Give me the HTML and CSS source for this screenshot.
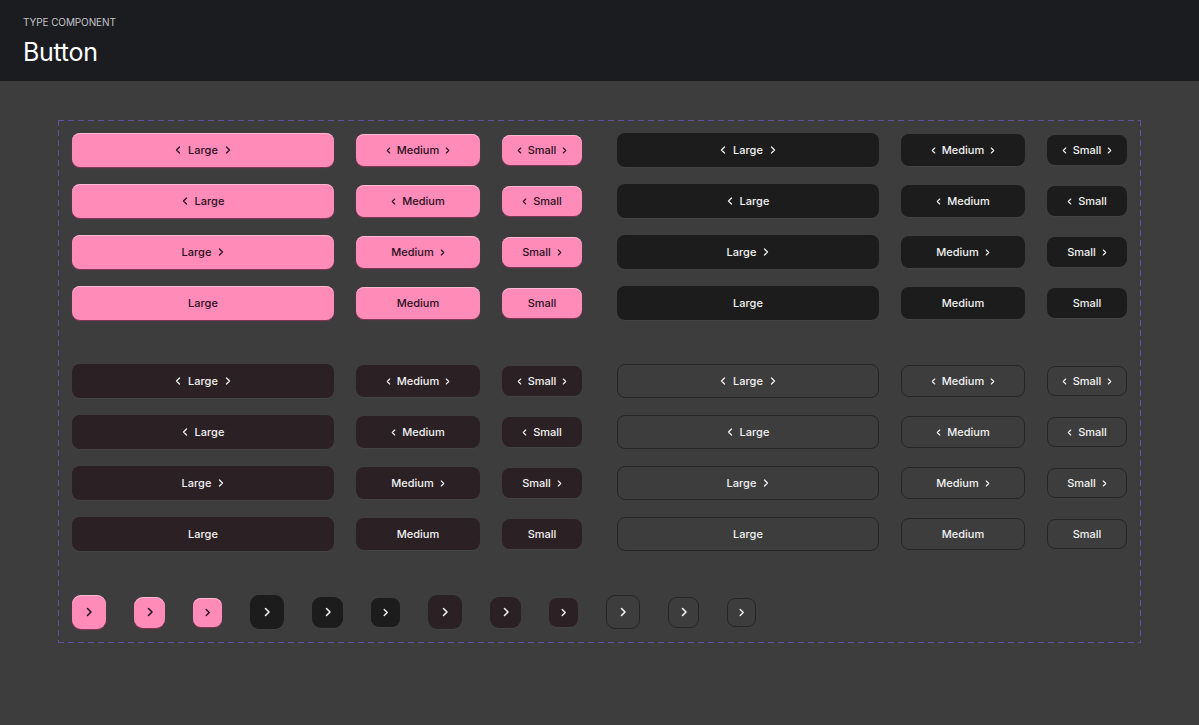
FILE: index.html
```html
<!DOCTYPE html>
<html>
<head>
<meta charset="utf-8">
<link rel="stylesheet" href="styles.css">
</head>
<body>
<header class="top">
  <div class="eyebrow">TYPE COMPONENT</div>
  <h1 class="title">Button</h1>
</header>
<main class="canvas">
  <div class="frame">
    <div class="section">
      <div class="group pink">
        <div class="btn lg"><svg class="ch" viewBox="0 0 6 8"><path d="M4.5 1 L1.5 4 L4.5 7"/></svg><span>Large</span><svg class="ch" viewBox="0 0 6 8"><path d="M1.5 1 L4.5 4 L1.5 7"/></svg></div>
        <div class="btn md"><svg class="ch" viewBox="0 0 6 8"><path d="M4.5 1 L1.5 4 L4.5 7"/></svg><span>Medium</span><svg class="ch" viewBox="0 0 6 8"><path d="M1.5 1 L4.5 4 L1.5 7"/></svg></div>
        <div class="btn sm"><svg class="ch" viewBox="0 0 6 8"><path d="M4.5 1 L1.5 4 L4.5 7"/></svg><span>Small</span><svg class="ch" viewBox="0 0 6 8"><path d="M1.5 1 L4.5 4 L1.5 7"/></svg></div>
        <div class="btn lg"><svg class="ch" viewBox="0 0 6 8"><path d="M4.5 1 L1.5 4 L4.5 7"/></svg><span>Large</span></div>
        <div class="btn md"><svg class="ch" viewBox="0 0 6 8"><path d="M4.5 1 L1.5 4 L4.5 7"/></svg><span>Medium</span></div>
        <div class="btn sm"><svg class="ch" viewBox="0 0 6 8"><path d="M4.5 1 L1.5 4 L4.5 7"/></svg><span>Small</span></div>
        <div class="btn lg"><span>Large</span><svg class="ch" viewBox="0 0 6 8"><path d="M1.5 1 L4.5 4 L1.5 7"/></svg></div>
        <div class="btn md"><span>Medium</span><svg class="ch" viewBox="0 0 6 8"><path d="M1.5 1 L4.5 4 L1.5 7"/></svg></div>
        <div class="btn sm"><span>Small</span><svg class="ch" viewBox="0 0 6 8"><path d="M1.5 1 L4.5 4 L1.5 7"/></svg></div>
        <div class="btn lg"><span>Large</span></div>
        <div class="btn md"><span>Medium</span></div>
        <div class="btn sm"><span>Small</span></div>
      </div>
      <div class="group black">
        <div class="btn lg"><svg class="ch" viewBox="0 0 6 8"><path d="M4.5 1 L1.5 4 L4.5 7"/></svg><span>Large</span><svg class="ch" viewBox="0 0 6 8"><path d="M1.5 1 L4.5 4 L1.5 7"/></svg></div>
        <div class="btn md"><svg class="ch" viewBox="0 0 6 8"><path d="M4.5 1 L1.5 4 L4.5 7"/></svg><span>Medium</span><svg class="ch" viewBox="0 0 6 8"><path d="M1.5 1 L4.5 4 L1.5 7"/></svg></div>
        <div class="btn sm"><svg class="ch" viewBox="0 0 6 8"><path d="M4.5 1 L1.5 4 L4.5 7"/></svg><span>Small</span><svg class="ch" viewBox="0 0 6 8"><path d="M1.5 1 L4.5 4 L1.5 7"/></svg></div>
        <div class="btn lg"><svg class="ch" viewBox="0 0 6 8"><path d="M4.5 1 L1.5 4 L4.5 7"/></svg><span>Large</span></div>
        <div class="btn md"><svg class="ch" viewBox="0 0 6 8"><path d="M4.5 1 L1.5 4 L4.5 7"/></svg><span>Medium</span></div>
        <div class="btn sm"><svg class="ch" viewBox="0 0 6 8"><path d="M4.5 1 L1.5 4 L4.5 7"/></svg><span>Small</span></div>
        <div class="btn lg"><span>Large</span><svg class="ch" viewBox="0 0 6 8"><path d="M1.5 1 L4.5 4 L1.5 7"/></svg></div>
        <div class="btn md"><span>Medium</span><svg class="ch" viewBox="0 0 6 8"><path d="M1.5 1 L4.5 4 L1.5 7"/></svg></div>
        <div class="btn sm"><span>Small</span><svg class="ch" viewBox="0 0 6 8"><path d="M1.5 1 L4.5 4 L1.5 7"/></svg></div>
        <div class="btn lg"><span>Large</span></div>
        <div class="btn md"><span>Medium</span></div>
        <div class="btn sm"><span>Small</span></div>
      </div>
    </div>
    <div class="section">
      <div class="group plum">
        <div class="btn lg"><svg class="ch" viewBox="0 0 6 8"><path d="M4.5 1 L1.5 4 L4.5 7"/></svg><span>Large</span><svg class="ch" viewBox="0 0 6 8"><path d="M1.5 1 L4.5 4 L1.5 7"/></svg></div>
        <div class="btn md"><svg class="ch" viewBox="0 0 6 8"><path d="M4.5 1 L1.5 4 L4.5 7"/></svg><span>Medium</span><svg class="ch" viewBox="0 0 6 8"><path d="M1.5 1 L4.5 4 L1.5 7"/></svg></div>
        <div class="btn sm"><svg class="ch" viewBox="0 0 6 8"><path d="M4.5 1 L1.5 4 L4.5 7"/></svg><span>Small</span><svg class="ch" viewBox="0 0 6 8"><path d="M1.5 1 L4.5 4 L1.5 7"/></svg></div>
        <div class="btn lg"><svg class="ch" viewBox="0 0 6 8"><path d="M4.5 1 L1.5 4 L4.5 7"/></svg><span>Large</span></div>
        <div class="btn md"><svg class="ch" viewBox="0 0 6 8"><path d="M4.5 1 L1.5 4 L4.5 7"/></svg><span>Medium</span></div>
        <div class="btn sm"><svg class="ch" viewBox="0 0 6 8"><path d="M4.5 1 L1.5 4 L4.5 7"/></svg><span>Small</span></div>
        <div class="btn lg"><span>Large</span><svg class="ch" viewBox="0 0 6 8"><path d="M1.5 1 L4.5 4 L1.5 7"/></svg></div>
        <div class="btn md"><span>Medium</span><svg class="ch" viewBox="0 0 6 8"><path d="M1.5 1 L4.5 4 L1.5 7"/></svg></div>
        <div class="btn sm"><span>Small</span><svg class="ch" viewBox="0 0 6 8"><path d="M1.5 1 L4.5 4 L1.5 7"/></svg></div>
        <div class="btn lg"><span>Large</span></div>
        <div class="btn md"><span>Medium</span></div>
        <div class="btn sm"><span>Small</span></div>
      </div>
      <div class="group outline">
        <div class="btn lg"><svg class="ch" viewBox="0 0 6 8"><path d="M4.5 1 L1.5 4 L4.5 7"/></svg><span>Large</span><svg class="ch" viewBox="0 0 6 8"><path d="M1.5 1 L4.5 4 L1.5 7"/></svg></div>
        <div class="btn md"><svg class="ch" viewBox="0 0 6 8"><path d="M4.5 1 L1.5 4 L4.5 7"/></svg><span>Medium</span><svg class="ch" viewBox="0 0 6 8"><path d="M1.5 1 L4.5 4 L1.5 7"/></svg></div>
        <div class="btn sm"><svg class="ch" viewBox="0 0 6 8"><path d="M4.5 1 L1.5 4 L4.5 7"/></svg><span>Small</span><svg class="ch" viewBox="0 0 6 8"><path d="M1.5 1 L4.5 4 L1.5 7"/></svg></div>
        <div class="btn lg"><svg class="ch" viewBox="0 0 6 8"><path d="M4.5 1 L1.5 4 L4.5 7"/></svg><span>Large</span></div>
        <div class="btn md"><svg class="ch" viewBox="0 0 6 8"><path d="M4.5 1 L1.5 4 L4.5 7"/></svg><span>Medium</span></div>
        <div class="btn sm"><svg class="ch" viewBox="0 0 6 8"><path d="M4.5 1 L1.5 4 L4.5 7"/></svg><span>Small</span></div>
        <div class="btn lg"><span>Large</span><svg class="ch" viewBox="0 0 6 8"><path d="M1.5 1 L4.5 4 L1.5 7"/></svg></div>
        <div class="btn md"><span>Medium</span><svg class="ch" viewBox="0 0 6 8"><path d="M1.5 1 L4.5 4 L1.5 7"/></svg></div>
        <div class="btn sm"><span>Small</span><svg class="ch" viewBox="0 0 6 8"><path d="M1.5 1 L4.5 4 L1.5 7"/></svg></div>
        <div class="btn lg"><span>Large</span></div>
        <div class="btn md"><span>Medium</span></div>
        <div class="btn sm"><span>Small</span></div>
      </div>
    </div>
    <div class="icons">
      <div class="ibtn pink ilg"><svg class="ich" viewBox="0 0 8 10"><path d="M2.5 1.5 L6 5 L2.5 8.5"/></svg></div>
      <div class="ibtn pink imd"><svg class="ich" viewBox="0 0 8 10"><path d="M2.5 1.5 L6 5 L2.5 8.5"/></svg></div>
      <div class="ibtn pink ism"><svg class="ich" viewBox="0 0 8 10"><path d="M2.5 1.5 L6 5 L2.5 8.5"/></svg></div>
      <div class="ibtn black ilg"><svg class="ich" viewBox="0 0 8 10"><path d="M2.5 1.5 L6 5 L2.5 8.5"/></svg></div>
      <div class="ibtn black imd"><svg class="ich" viewBox="0 0 8 10"><path d="M2.5 1.5 L6 5 L2.5 8.5"/></svg></div>
      <div class="ibtn black ism"><svg class="ich" viewBox="0 0 8 10"><path d="M2.5 1.5 L6 5 L2.5 8.5"/></svg></div>
      <div class="ibtn plum ilg"><svg class="ich" viewBox="0 0 8 10"><path d="M2.5 1.5 L6 5 L2.5 8.5"/></svg></div>
      <div class="ibtn plum imd"><svg class="ich" viewBox="0 0 8 10"><path d="M2.5 1.5 L6 5 L2.5 8.5"/></svg></div>
      <div class="ibtn plum ism"><svg class="ich" viewBox="0 0 8 10"><path d="M2.5 1.5 L6 5 L2.5 8.5"/></svg></div>
      <div class="ibtn outline ilg"><svg class="ich" viewBox="0 0 8 10"><path d="M2.5 1.5 L6 5 L2.5 8.5"/></svg></div>
      <div class="ibtn outline imd"><svg class="ich" viewBox="0 0 8 10"><path d="M2.5 1.5 L6 5 L2.5 8.5"/></svg></div>
      <div class="ibtn outline ism"><svg class="ich" viewBox="0 0 8 10"><path d="M2.5 1.5 L6 5 L2.5 8.5"/></svg></div>
    </div>
  </div>
</main>
</body>
</html>
```

FILE: styles.css
```css
* { box-sizing: border-box; }
html, body { margin: 0; padding: 0; }
body {
  background: #3d3d3d;
  font-family: Inter, "Noto Sans", "Liberation Sans", sans-serif;
  width: 1199px;
  height: 725px;
  overflow: hidden;
}
.top {
  background: #1b1c20;
  height: 81px;
  padding: 16px 23px 0;
}
.eyebrow {
  color: #c4c4c8;
  font-size: 10px;
  line-height: 13px;
  letter-spacing: -0.1px;
}
.title {
  margin: 8px 0 0;
  color: #ffffff;
  font-size: 25px;
  font-weight: 400;
  line-height: 30px;
  letter-spacing: -0.3px;
}
.canvas {
  padding: 39px 0 0 58px;
}
.frame {
  width: 1083px;
  padding: 13px 14px 14px;
  display: flex;
  flex-direction: column;
  gap: 44px;
  background-image:
    repeating-linear-gradient(90deg, #6450a0 0 6px, transparent 6px 10px),
    repeating-linear-gradient(90deg, #6450a0 0 6px, transparent 6px 10px),
    repeating-linear-gradient(180deg, #6450a0 0 6px, transparent 6px 10px),
    repeating-linear-gradient(180deg, #6450a0 0 6px, transparent 6px 10px);
  background-size: 100% 1px, 100% 1px, 1px 100%, 1px 100%;
  background-position: 0 0, 0 100%, 0 0, 100% 0;
  background-repeat: no-repeat;
}
.section {
  display: flex;
  gap: 35px;
}
.group {
  display: grid;
  grid-template-columns: 262px 124px 80px;
  grid-auto-rows: 34px;
  column-gap: 22px;
  row-gap: 17px;
  align-items: center;
}
.btn {
  display: flex;
  align-items: center;
  justify-content: center;
  gap: 7px;
  border-radius: 8px;
  font-size: 11px;
  font-weight: 500;
  line-height: 13px;
}
.btn.lg { height: 34px; }
.btn.md { height: 32px; gap: 6px; }
.btn.sm { height: 30px; gap: 6px; }
.ch {
  width: 6px;
  height: 8px;
  fill: none;
  stroke: currentColor;
  stroke-width: 1.3;
  stroke-linecap: round;
  stroke-linejoin: round;
}
.btn.md .ch, .btn.sm .ch { width: 5px; height: 7px; }

.pink .btn, .ibtn.pink {
  background: #ff8bb9;
  color: #2a1020;
  box-shadow: inset 0 1px 0 rgba(255, 220, 235, 0.55), 0 1px 1px #8a3558;
}
.black .btn, .ibtn.black {
  background: #1c1c1c;
  color: #f2f2f2;
  box-shadow: 0 1px 0 rgba(255, 255, 255, 0.03);
}
.plum .btn, .ibtn.plum {
  background: #2b2024;
  color: #f2f2f2;
  box-shadow: 0 1px 0 rgba(255, 255, 255, 0.03);
}
.outline .btn, .ibtn.outline {
  background: transparent;
  border: 1px solid #262626;
  color: #f2f2f2;
}

.icons {
  display: flex;
  align-items: center;
  gap: 28px;
  height: 34px;
}
.ibtn {
  display: flex;
  align-items: center;
  justify-content: center;
  border-radius: 9px;
}
.ilg { width: 34px; height: 34px; }
.imd { width: 31px; height: 31px; }
.ism { width: 29px; height: 29px; border-radius: 8px; }
.ich {
  width: 8px;
  height: 10px;
  fill: none;
  stroke: currentColor;
  stroke-width: 1.6;
  stroke-linecap: round;
  stroke-linejoin: round;
}
.ism .ich { width: 7px; height: 9px; }
```
